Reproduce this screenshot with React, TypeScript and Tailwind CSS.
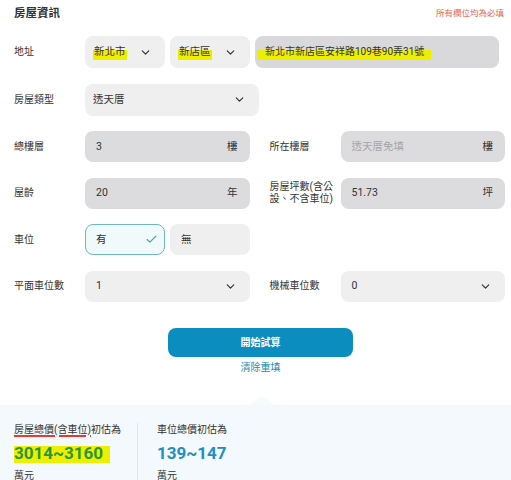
import React from "react";
import { ChevronDown, Check } from "lucide-react";

const FONT = "font-['Roboto','Noto_Sans_CJK_TC',sans-serif]";
const MARK = "bg-[linear-gradient(to_bottom,transparent_35%,#eeee00_35%)]";

function Select({ value, mark, className = "" }: { value: string; mark?: boolean; className?: string }) {
  return (
    <div className={`flex h-full items-center justify-between rounded-lg bg-[#efefef] pl-[8px] pr-[13px] ${className}`}>
      <span className={mark ? `${MARK} px-[1px] pb-[2px] leading-[13px]` : ""}>{value}</span>
      <ChevronDown className="h-[13px] w-[13px] text-[#333]" strokeWidth={2.2} />
    </div>
  );
}

function Field({ value, unit, placeholder }: { value?: string; unit: string; placeholder?: string }) {
  return (
    <div className="flex h-full flex-1 items-center justify-between rounded-lg bg-[#dcdcde] pl-[11px] pr-[12px]">
      <span className={value ? "text-[#333]" : "text-[#a5a5a8]"}>{value ?? placeholder}</span>
      <span className="text-[#333]">{unit}</span>
    </div>
  );
}

function Label({ children }: { children: React.ReactNode }) {
  return <div className="w-[71px] shrink-0 text-[10px] leading-[12px] text-[#333]">{children}</div>;
}

function Row({ children }: { children: React.ReactNode }) {
  return <div className="flex h-[31px] items-center">{children}</div>;
}

export default function App() {
  return (
    <div className={`relative h-[480px] w-[511px] overflow-hidden bg-white text-[10.5px] text-[#333] ${FONT}`}>
      <div className="pl-[14px] pr-[6px]">
        <div className="flex h-[27px] items-center justify-between pr-[1px]">
          <h1 className="text-[11.5px] font-bold text-[#333]">房屋資訊</h1>
          <span className="text-[8.5px] text-[#e8654f]">所有欄位均為必填</span>
        </div>

        <div className="mt-[9px] flex flex-col gap-[15.5px]">
          <div className="flex h-[32px] items-center">
            <Label>地址</Label>
            <div className="flex h-full flex-1 gap-[5px] pr-[6px]">
              <Select value="新北市" mark className="w-[80px]" />
              <Select value="新店區" mark className="w-[80px]" />
              <div className="flex h-full flex-1 items-center rounded-lg bg-[#d9d9db] pl-[2px]">
                <span className={`${MARK} pb-[2px] pl-[8px] pr-[7px] text-[10px] leading-[13px]`}>
                  新北市新店區安祥路109巷90弄31號
                </span>
              </div>
            </div>
          </div>

          <div className="flex h-[32px] items-center">
            <Label>房屋類型</Label>
            <Select value="透天厝" className="w-[174px]" />
          </div>

          <div className="grid grid-cols-2 gap-x-[20px] gap-y-[15.5px]">
            <Row>
              <Label>總樓層</Label>
              <Field value="3" unit="樓" />
            </Row>
            <Row>
              <Label>所在樓層</Label>
              <Field placeholder="透天厝免填" unit="樓" />
            </Row>
            <Row>
              <Label>屋齡</Label>
              <Field value="20" unit="年" />
            </Row>
            <Row>
              <Label>
                房屋坪數(含公
                <br />
                設、不含車位)
              </Label>
              <Field value="51.73" unit="坪" />
            </Row>
            <Row>
              <Label>車位</Label>
              <div className="flex h-full flex-1 gap-[5px]">
                <div className="flex h-full w-[80px] items-center justify-between rounded-lg border border-[#6fb6bd] bg-[#f1fafb] pl-[10px] pr-[6px]">
                  <span>有</span>
                  <Check className="h-[13px] w-[13px] text-[#3fa3ae]" strokeWidth={2} />
                </div>
                <div className="flex h-full flex-1 items-center rounded-lg bg-[#efefef] pl-[11px]">無</div>
              </div>
            </Row>
            <div />
            <Row>
              <Label>平面車位數</Label>
              <Select value="1" className="flex-1 pl-[11px]" />
            </Row>
            <Row>
              <Label>機械車位數</Label>
              <Select value="0" className="flex-1 pl-[11px]" />
            </Row>
          </div>
        </div>
      </div>

      <div className="mt-[26px] flex flex-col items-center">
        <button
          type="button"
          className="ml-[10px] flex h-[29px] w-[185px] items-center justify-center rounded-lg bg-[#0b8ebf] text-[10px] font-bold text-white"
        >
          開始試算
        </button>
        <button type="button" className="ml-[10px] mt-[3px] text-[10px] text-[#1b8db8]">
          清除重填
        </button>
      </div>

      <div className="relative mt-[30px] h-[200px] bg-[#f3f9fc]">
        <div className="absolute -top-[9px] left-[250px] h-0 w-0 border-x-[12px] border-b-[9px] border-x-transparent border-b-[#f5fafc]" />
        <div className="flex pt-[18px]">
          <div className="w-[138px] border-r border-[#dde7ec] pl-[14px]">
            <div className="text-[10px] leading-[14px] text-[#333]">
              <span className="underline decoration-[#e53935] decoration-[1.5px] underline-offset-[2px]">房屋總價(含車位)</span>
              初估為
            </div>
            <div className="mt-[5px]">
              <span className="bg-[linear-gradient(to_bottom,transparent_15%,#eeee00_15%)] pr-[7px] text-[17px] font-bold leading-[22px] text-[#27973f]">
                3014~3160
              </span>
            </div>
            <div className="mt-[4px] pb-[10px] text-[10px] text-[#333]">萬元</div>
          </div>
          <div className="pl-[19px]">
            <div className="text-[10px] leading-[14px] text-[#333]">車位總價初估為</div>
            <div className="mt-[5px] text-[17px] font-bold leading-[22px] text-[#1e90c3]">139~147</div>
            <div className="mt-[4px] text-[10px] text-[#333]">萬元</div>
          </div>
        </div>
      </div>
    </div>
  );
}
